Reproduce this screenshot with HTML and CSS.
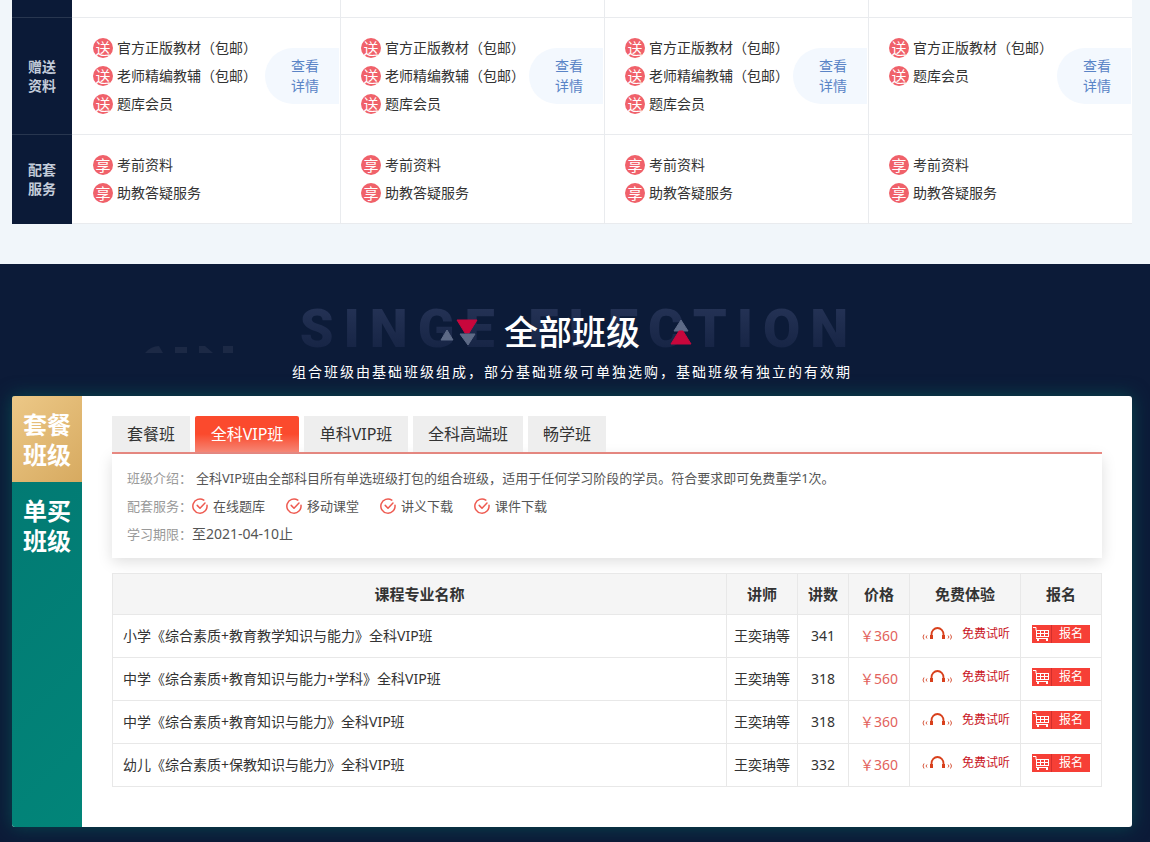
FILE: index.html
```html
<!DOCTYPE html>
<html lang="zh-CN">
<head>
<meta charset="utf-8">
<title>全部班级</title>
<link rel="stylesheet" href="styles.css">
</head>
<body>
<svg class="sprite" aria-hidden="true">
  <symbol id="check" viewBox="0 0 16 16">
    <path d="M11.8 2.1A7.1 7.1 0 1 0 15 7.2" fill="none" stroke="#ee5a50" stroke-width="1.5" stroke-linecap="round"/>
    <path d="M5.2 7.400l2.800 2.800 5-5.200" fill="none" stroke="#ee5a50" stroke-width="1.5" stroke-linecap="round" stroke-linejoin="round"/>
  </symbol>
  <symbol id="phones" viewBox="0 0 30 16">
    <path d="M9.500 11V8.500a6 6.500 0 0 1 12 0V11" fill="none" stroke="#d8401c" stroke-width="1.800"/>
    <path d="M8 9h3v4H8zM20 9h3v4h-3z" fill="#d8401c"/>
    <path d="M2 8.500q-2 2.500 0 5M5 9.500q-2 1.500 0 3M26 9.500q2 1.500 0 3M28.500 8.500q2 2.500 0 5" fill="none" stroke="#d8573c" stroke-width="1"/>
  </symbol>
  <symbol id="cart" viewBox="0 0 18 18">
    <path d="M1 2.500h3v3h13M4.500 5v7.500M4.500 8.500H17M4.500 11.500H17M8.500 5.500v6M12.500 5.500v6M16.500 5.500v6M4 13.500h12" fill="none" stroke="#fff" stroke-width="1"/>
    <path d="M5 14h2v2H5zM14 14h2v2h-2z" fill="#fff"/>
  </symbol>
</svg>

<section class="compare">
  <div class="compare-grid">
    <div class="label stub"></div><div class="cell"></div><div class="cell"></div><div class="cell"></div><div class="cell"></div>

    <div class="label">赠送<br>资料</div>
    <div class="cell first">
      <ul><li><i>送</i>官方正版教材（包邮）</li><li><i>送</i>老师精编教辅（包邮）</li><li><i>送</i>题库会员</li></ul>
      <a class="more" href="#">查看<br>详情</a>
    </div>
    <div class="cell">
      <ul><li><i>送</i>官方正版教材（包邮）</li><li><i>送</i>老师精编教辅（包邮）</li><li><i>送</i>题库会员</li></ul>
      <a class="more" href="#">查看<br>详情</a>
    </div>
    <div class="cell">
      <ul><li><i>送</i>官方正版教材（包邮）</li><li><i>送</i>老师精编教辅（包邮）</li><li><i>送</i>题库会员</li></ul>
      <a class="more" href="#">查看<br>详情</a>
    </div>
    <div class="cell">
      <ul><li><i>送</i>官方正版教材（包邮）</li><li><i>送</i>题库会员</li></ul>
      <a class="more" href="#">查看<br>详情</a>
    </div>

    <div class="label last">配套<br>服务</div>
    <div class="cell first"><ul><li><i>享</i>考前资料</li><li><i>享</i>助教答疑服务</li></ul></div>
    <div class="cell"><ul><li><i>享</i>考前资料</li><li><i>享</i>助教答疑服务</li></ul></div>
    <div class="cell"><ul><li><i>享</i>考前资料</li><li><i>享</i>助教答疑服务</li></ul></div>
    <div class="cell"><ul><li><i>享</i>考前资料</li><li><i>享</i>助教答疑服务</li></ul></div>
  </div>
</section>

<section class="classes">
  <header class="heading">
    <div class="ghost" aria-hidden="true">SINGE ELECTION</div>
    <svg class="shards" width="90" height="9" viewBox="0 0 90 9" aria-hidden="true">
      <path d="M0 8Q6 1 14 1l4 7zM30 2h12v6H30zM54 1h6l8 7H54zM78 1h10v7H78z" fill="#1c2945"/>
    </svg>
    <div class="title-row">
      <svg width="38" height="30" viewBox="0 0 38 30" aria-hidden="true">
        <path d="M7 13l6 10H1z" fill="#5d6a86" stroke="#5d6a86" stroke-linejoin="round"/>
        <path d="M17 3h20l-8 13h-4z" fill="#c8073c" stroke="#c8073c" stroke-linejoin="round"/>
        <path d="M20 17h15l-7 11z" fill="#5d6a86" stroke="#5d6a86" stroke-linejoin="round"/>
      </svg>
      <h2>全部班级</h2>
      <svg width="38" height="30" viewBox="0 0 38 30" aria-hidden="true">
        <path d="M15 3l7 11H8z" fill="#5d6a86" stroke="#5d6a86" stroke-linejoin="round"/>
        <path d="M13 14h4l8 13H5z" fill="#c8073c" stroke="#c8073c" stroke-linejoin="round"/>
      </svg>
    </div>
    <p>组合班级由基础班级组成<span class="mid">，</span>部分基础班级可单独选购<span class="mid">，</span>基础班级有独立的有效期</p>
  </header>

  <div class="card">
    <nav class="side">
      <button type="button" class="active">套餐<br>班级</button>
      <button type="button">单买<br>班级</button>
    </nav>
    <div class="main">
      <div class="tabs">
        <button type="button">套餐班</button>
        <button type="button" class="wide active">全科VIP班</button>
        <button type="button" class="wide">单科VIP班</button>
        <button type="button">全科高端班</button>
        <button type="button">畅学班</button>
      </div>
      <dl class="info">
        <div><dt>班级介绍<span class="mid">：</span></dt><dd class="intro">全科VIP班由全部科目所有单选班级打包的组合班级<span class="mid">，</span>适用于任何学习阶段的学员。符合要求即可免费重学1次。</dd></div>
        <div><dt>配套服务<span class="mid">：</span></dt><dd class="services">
          <span><svg width="16" height="16"><use href="#check"/></svg>在线题库</span>
          <span><svg width="16" height="16"><use href="#check"/></svg>移动课堂</span>
          <span><svg width="16" height="16"><use href="#check"/></svg>讲义下载</span>
          <span><svg width="16" height="16"><use href="#check"/></svg>课件下载</span>
        </dd></div>
        <div><dt>学习期限<span class="mid">：</span></dt><dd class="until">至2021-04-10止</dd></div>
      </dl>
      <table>
        <colgroup><col><col class="c-teacher"><col class="c-count"><col class="c-price"><col class="c-trial"><col class="c-join"></colgroup>
        <thead><tr><th>课程专业名称</th><th>讲师</th><th>讲数</th><th>价格</th><th>免费体验</th><th>报名</th></tr></thead>
        <tbody>
          <tr><td class="name">小学《综合素质+教育教学知识与能力》全科VIP班</td><td>王奕珃等</td><td>341</td><td class="price">￥360</td>
            <td class="act"><a class="trial" href="#"><svg width="30" height="16"><use href="#phones"/></svg>免费试听</a></td>
            <td class="act"><a class="join" href="#"><svg width="18" height="18"><use href="#cart"/></svg><span>报名</span></a></td></tr>
          <tr><td class="name">中学《综合素质+教育知识与能力+学科》全科VIP班</td><td>王奕珃等</td><td>318</td><td class="price">￥560</td>
            <td class="act"><a class="trial" href="#"><svg width="30" height="16"><use href="#phones"/></svg>免费试听</a></td>
            <td class="act"><a class="join" href="#"><svg width="18" height="18"><use href="#cart"/></svg><span>报名</span></a></td></tr>
          <tr><td class="name">中学《综合素质+教育知识与能力》全科VIP班</td><td>王奕珃等</td><td>318</td><td class="price">￥360</td>
            <td class="act"><a class="trial" href="#"><svg width="30" height="16"><use href="#phones"/></svg>免费试听</a></td>
            <td class="act"><a class="join" href="#"><svg width="18" height="18"><use href="#cart"/></svg><span>报名</span></a></td></tr>
          <tr><td class="name">幼儿《综合素质+保教知识与能力》全科VIP班</td><td>王奕珃等</td><td>332</td><td class="price">￥360</td>
            <td class="act"><a class="trial" href="#"><svg width="30" height="16"><use href="#phones"/></svg>免费试听</a></td>
            <td class="act"><a class="join" href="#"><svg width="18" height="18"><use href="#cart"/></svg><span>报名</span></a></td></tr>
        </tbody>
      </table>
    </div>
  </div>
</section>
</body>
</html>
```
FILE: styles.css
```css
* { box-sizing: border-box; }
body, ul, li, dl, dt, dd, h2, p { margin: 0; padding: 0; }
body {
  font: 14px/20px "Noto Sans", "Noto Sans CJK SC", sans-serif;
  color: #333;
  background: #f1f6fa;
}
button { font: inherit; border: 0; cursor: pointer; }
a { text-decoration: none; }
svg { display: block; flex: none; }
.sprite { position: absolute; width: 0; height: 0; }
/* Punctuation centred in its square */
.mid { font-family: "Noto Sans CJK TC", sans-serif; line-height: 1; }

/* Package comparison */
.compare { padding: 0 18px 40px 12px; }
.compare-grid {
  display: grid;
  grid-template-columns: 60px 269fr 264fr 264fr 263fr;
  background: #fff;
}
.label {
  display: flex;
  align-items: center;
  justify-content: center;
  background: #0b1a37;
  border-bottom: 1px solid #28364f;
  color: #c3ccda;
  font-weight: 700;
  line-height: 19px;
}
.stub { min-height: 18px; }
.last { border-bottom-color: #0b1a37; }
.cell {
  display: flex;
  align-items: center;
  justify-content: space-between;
  padding: 16px 0 16px 20px;
  border-right: 1px solid #e9ebee;
  border-bottom: 1px solid #e9ebee;
}
.first { padding-left: 21px; }
.stub ~ .cell:nth-child(-n+5) { padding: 0; }
.cell:nth-child(5n) { border-right: 0; }
.cell ul { list-style: none; align-self: flex-start; }
.cell li {
  display: flex;
  align-items: center;
  gap: 4px;
  height: 28px;
  white-space: nowrap;
}
.cell i {
  width: 20px;
  height: 20px;
  border-radius: 50%;
  background: #f0616a;
  color: #fff;
  font-style: normal;
  font-size: 15px;
  line-height: 20px;
  text-align: center;
}
.more {
  width: 74px;
  padding: 8px 0 8px 6px;
  margin-right: 1px;
  border-radius: 28px 0 0 28px;
  background: #f3f8fe;
  color: #5a84c6;
  text-align: center;
}

/* Class list */
.classes {
  padding: 0 18px 15px 12px;
  background: #0c1b38;
}
.heading {
  position: relative;
  display: flex;
  flex-direction: column;
  align-items: center;
  padding-top: 48px;
  height: 132px;
}
.ghost {
  position: absolute;
  top: 37px;
  left: 14px;
  right: 0;
  text-align: center;
  font: 900 54px/56px Roboto, sans-serif;
  letter-spacing: 10px;
  color: transparent;
  background: linear-gradient(#263457, #142242);
  background-clip: text;
  white-space: nowrap;
}
.shards { position: absolute; top: 81px; left: 133px; }
.title-row {
  position: relative;
  display: flex;
  align-items: center;
  gap: 26px;
}
.title-row h2 {
  color: #fff;
  font-size: 34px;
  line-height: 40px;
  font-weight: 500;
}
.heading p {
  position: relative;
  margin-top: 10px;
  color: #fff;
  letter-spacing: 2px;
}
.card {
  display: flex;
  border-radius: 3px;
  background: #fff;
  box-shadow: 0 0 18px #08484f;
}
.side {
  width: 70px;
  flex: none;
  display: flex;
  flex-direction: column;
  border-radius: 3px 0 0 3px;
  overflow: hidden;
  background: linear-gradient(135deg, #027872, #028579);
}
.side button {
  height: 86px;
  padding: 2px 0 0;
  background: none;
  color: #fff;
  font-size: 24px;
  line-height: 30px;
  font-weight: 700;
}
.side .active { background: linear-gradient(135deg, #ecc887, #d7aa60); }
.main { flex: 1; padding: 20px 30px 40px; }
.tabs {
  display: flex;
  gap: 5px;
  border-bottom: 2px solid #ec8b84;
}
.tabs button {
  height: 36px;
  padding: 0 15px;
  background: #eee;
  color: #333;
  font-size: 16px;
  line-height: 36px;
}
.tabs .wide { min-width: 104px; }
.tabs .active {
  border-radius: 2px 2px 0 0;
  background: linear-gradient(#fb4a2d 50%, #f58675);
  color: #fff;
}
.info {
  padding: 10px 15px;
  font-size: 13px;
  line-height: 28px;
  color: #555;
  box-shadow: 0 4px 14px rgba(0, 0, 0, .13);
}
.info > div, .services, .services span { display: flex; align-items: center; }
.info dt { color: #999; }
.intro { padding-left: 4px; }
.services { gap: 21px; }
.services span { gap: 5px; }
.until { font-size: 14px; }

table {
  width: 100%;
  margin-top: 15px;
  border-collapse: collapse;
  table-layout: fixed;
}
th, td {
  padding: 0;
  border: 1px solid #e8e8e8;
  text-align: center;
  white-space: nowrap;
}
th { height: 41px; background: #f5f5f5; font-size: 15px; }
td { height: 43px; }
.c-teacher { width: 71px; }
.c-count { width: 51px; }
.c-price { width: 61px; }
.c-trial { width: 111px; }
.c-join { width: 81px; }
.name { padding-left: 10px; text-align: left; }
.price { color: #e2625c; }
.act { padding-bottom: 5px; font-size: 12px; line-height: 18px; }
.trial, .join { display: inline-flex; align-items: center; vertical-align: middle; }
.trial { gap: 10px; padding-left: 2px; color: #c9151e; }
.join { width: 58px; height: 18px; background: #f63f36; color: #fff; }
.join span { flex: 1; margin-left: 1px; border-left: 1px solid #d32f2c; }
```
